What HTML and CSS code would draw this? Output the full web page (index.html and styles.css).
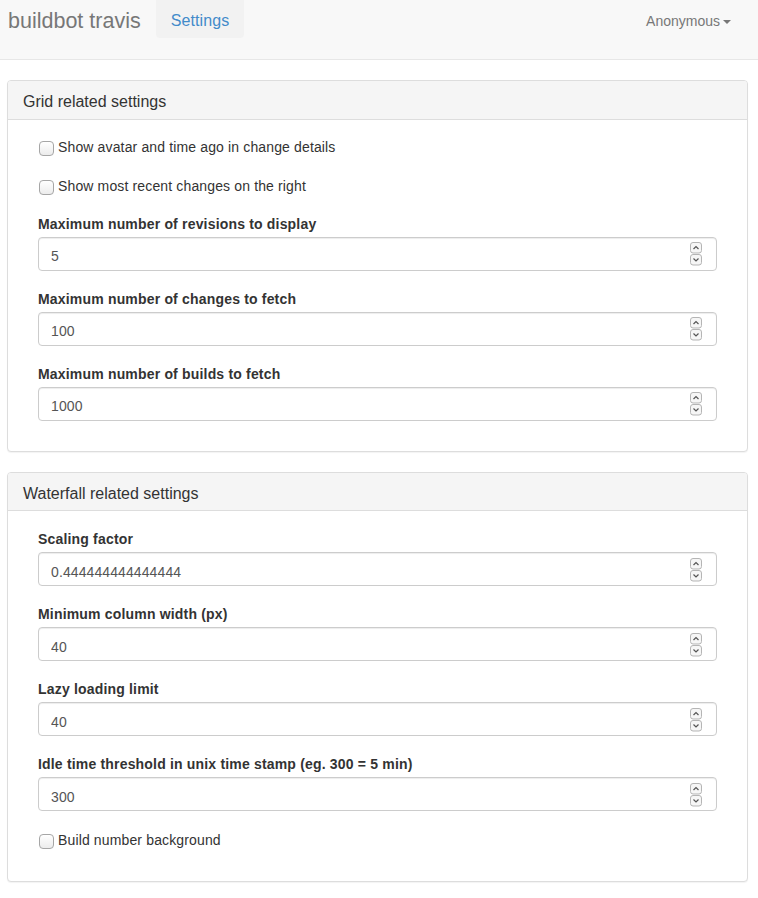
FILE: index.html
```html
<!DOCTYPE html>
<html>
<head>
<meta charset="utf-8">
<title>Settings</title>
<link rel="stylesheet" href="styles.css">
</head>
<body>
<nav class="navbar">
  <a class="brand" href="#">buildbot travis</a>
  <ul class="nav">
    <li><a class="nav-link active" href="#">Settings</a></li>
  </ul>
  <div class="user">Anonymous<span class="caret"></span></div>
</nav>

<main class="page">
  <section class="panel">
    <div class="panel-heading">Grid related settings</div>
    <div class="panel-body">
      <label class="check"><input type="checkbox" class="box">Show avatar and time ago in change details</label>
      <label class="check"><input type="checkbox" class="box">Show most recent changes on the right</label>
      <div class="form-group">
        <label class="field-label">Maximum number of revisions to display</label>
        <div class="num"><input class="num-input" type="text" value="5"><svg class="spin" width="12" height="24" viewBox="0 0 12 24"><rect x="0.5" y="0.5" width="11" height="10.5" rx="2.5" fill="#f6f6f6" stroke="#b5b5b5"/><path d="M3.5 7 L6 4.5 L8.5 7" fill="none" stroke="#555" stroke-width="1.2"/><rect x="0.5" y="12.5" width="11" height="10.5" rx="2.5" fill="#f6f6f6" stroke="#b5b5b5"/><path d="M3.5 16.5 L6 19 L8.5 16.5" fill="none" stroke="#555" stroke-width="1.2"/></svg></div>
      </div>
      <div class="form-group">
        <label class="field-label">Maximum number of changes to fetch</label>
        <div class="num"><input class="num-input" type="text" value="100"><svg class="spin" width="12" height="24" viewBox="0 0 12 24"><rect x="0.5" y="0.5" width="11" height="10.5" rx="2.5" fill="#f6f6f6" stroke="#b5b5b5"/><path d="M3.5 7 L6 4.5 L8.5 7" fill="none" stroke="#555" stroke-width="1.2"/><rect x="0.5" y="12.5" width="11" height="10.5" rx="2.5" fill="#f6f6f6" stroke="#b5b5b5"/><path d="M3.5 16.5 L6 19 L8.5 16.5" fill="none" stroke="#555" stroke-width="1.2"/></svg></div>
      </div>
      <div class="form-group last">
        <label class="field-label">Maximum number of builds to fetch</label>
        <div class="num"><input class="num-input" type="text" value="1000"><svg class="spin" width="12" height="24" viewBox="0 0 12 24"><rect x="0.5" y="0.5" width="11" height="10.5" rx="2.5" fill="#f6f6f6" stroke="#b5b5b5"/><path d="M3.5 7 L6 4.5 L8.5 7" fill="none" stroke="#555" stroke-width="1.2"/><rect x="0.5" y="12.5" width="11" height="10.5" rx="2.5" fill="#f6f6f6" stroke="#b5b5b5"/><path d="M3.5 16.5 L6 19 L8.5 16.5" fill="none" stroke="#555" stroke-width="1.2"/></svg></div>
      </div>
    </div>
  </section>

  <section class="panel">
    <div class="panel-heading">Waterfall related settings</div>
    <div class="panel-body">
      <div class="form-group">
        <label class="field-label">Scaling factor</label>
        <div class="num"><input class="num-input" type="text" value="0.444444444444444"><svg class="spin" width="12" height="24" viewBox="0 0 12 24"><rect x="0.5" y="0.5" width="11" height="10.5" rx="2.5" fill="#f6f6f6" stroke="#b5b5b5"/><path d="M3.5 7 L6 4.5 L8.5 7" fill="none" stroke="#555" stroke-width="1.2"/><rect x="0.5" y="12.5" width="11" height="10.5" rx="2.5" fill="#f6f6f6" stroke="#b5b5b5"/><path d="M3.5 16.5 L6 19 L8.5 16.5" fill="none" stroke="#555" stroke-width="1.2"/></svg></div>
      </div>
      <div class="form-group">
        <label class="field-label">Minimum column width (px)</label>
        <div class="num"><input class="num-input" type="text" value="40"><svg class="spin" width="12" height="24" viewBox="0 0 12 24"><rect x="0.5" y="0.5" width="11" height="10.5" rx="2.5" fill="#f6f6f6" stroke="#b5b5b5"/><path d="M3.5 7 L6 4.5 L8.5 7" fill="none" stroke="#555" stroke-width="1.2"/><rect x="0.5" y="12.5" width="11" height="10.5" rx="2.5" fill="#f6f6f6" stroke="#b5b5b5"/><path d="M3.5 16.5 L6 19 L8.5 16.5" fill="none" stroke="#555" stroke-width="1.2"/></svg></div>
      </div>
      <div class="form-group">
        <label class="field-label">Lazy loading limit</label>
        <div class="num"><input class="num-input" type="text" value="40"><svg class="spin" width="12" height="24" viewBox="0 0 12 24"><rect x="0.5" y="0.5" width="11" height="10.5" rx="2.5" fill="#f6f6f6" stroke="#b5b5b5"/><path d="M3.5 7 L6 4.5 L8.5 7" fill="none" stroke="#555" stroke-width="1.2"/><rect x="0.5" y="12.5" width="11" height="10.5" rx="2.5" fill="#f6f6f6" stroke="#b5b5b5"/><path d="M3.5 16.5 L6 19 L8.5 16.5" fill="none" stroke="#555" stroke-width="1.2"/></svg></div>
      </div>
      <div class="form-group">
        <label class="field-label">Idle time threshold in unix time stamp (eg. 300 = 5 min)</label>
        <div class="num"><input class="num-input" type="text" value="300"><svg class="spin" width="12" height="24" viewBox="0 0 12 24"><rect x="0.5" y="0.5" width="11" height="10.5" rx="2.5" fill="#f6f6f6" stroke="#b5b5b5"/><path d="M3.5 7 L6 4.5 L8.5 7" fill="none" stroke="#555" stroke-width="1.2"/><rect x="0.5" y="12.5" width="11" height="10.5" rx="2.5" fill="#f6f6f6" stroke="#b5b5b5"/><path d="M3.5 16.5 L6 19 L8.5 16.5" fill="none" stroke="#555" stroke-width="1.2"/></svg></div>
      </div>
      <label class="check last"><input type="checkbox" class="box">Build number background</label>
    </div>
  </section>
</main>
</body>
</html>
```

FILE: styles.css
```css
* { box-sizing: border-box; }

body {
  margin: 0;
  font-family: "Liberation Sans", Arial, Helvetica, sans-serif;
  font-size: 14px;
  line-height: 20px;
  color: #333;
  background: #fff;
}

.navbar {
  display: flex;
  align-items: flex-start;
  height: 60px;
  background: #f8f8f8;
  border-bottom: 1px solid #e7e7e7;
  margin-bottom: 20px;
}

.brand {
  display: block;
  padding: 11px 15px 0 8px;
  font-size: 21.5px;
  line-height: 20px;
  color: #777;
  text-decoration: none;
}

.nav {
  list-style: none;
  margin: 0;
  padding: 0;
  display: flex;
}

.nav-link {
  display: block;
  padding: 11px 15px 7px 15px;
  font-size: 16px;
  line-height: 20px;
  color: #428bca;
  text-decoration: none;
  letter-spacing: 0.1px;
}

.nav-link.active {
  background: #f2f2f2;
  border-radius: 0 0 4px 4px;
}

.user {
  margin-left: auto;
  padding: 11px 27px 0 0;
  color: #777;
  font-size: 14px;
  line-height: 20px;
  display: flex;
  align-items: center;
}

.caret {
  display: inline-block;
  width: 0;
  height: 0;
  margin-left: 3px;
  margin-top: 1px;
  border-top: 4px solid #777;
  border-left: 4px solid transparent;
  border-right: 4px solid transparent;
}

.page {
  padding: 0 10px 0 7px;
}

.panel {
  border: 1px solid #ddd;
  border-radius: 4px;
  background: #fff;
  box-shadow: 0 1px 1px rgba(0, 0, 0, 0.05);
  margin-bottom: 20px;
}

.panel-heading {
  background: #f5f5f5;
  border-bottom: 1px solid #ddd;
  border-radius: 3px 3px 0 0;
  padding: 12px 15px 8px 15px;
  font-size: 16px;
  line-height: 17.6px;
  color: #333;
}

.panel-body {
  padding: 16px 30px 15px 30px;
}

.check {
  display: flex;
  align-items: flex-start;
  height: 20px;
  line-height: 22px;
  margin-bottom: 17px;
  font-weight: normal;
  color: #333;
  letter-spacing: 0.14px;
}

.check + .check {
  margin-top: 19px;
}

.check.last {
  margin-top: 18px;
  margin-bottom: 17px;
}

.box {
  -webkit-appearance: none;
  appearance: none;
  width: 15px;
  height: 15px;
  margin: 5px 4px 0 1px;
  border: 1px solid #a6a6a6;
  border-radius: 4px;
  background: linear-gradient(#ffffff, #ececec);
  flex: none;
}

.form-group {
  margin-bottom: 16px;
}

.form-group.last {
  margin-bottom: 15px;
}

.field-label {
  display: block;
  font-weight: bold;
  line-height: 20px;
  padding-top: 2px;
  margin-bottom: 3px;
  letter-spacing: 0.18px;
}

.num {
  display: flex;
  align-items: center;
  height: 34px;
  border: 1px solid #ccc;
  border-radius: 4px;
  box-shadow: inset 0 1px 1px rgba(0, 0, 0, 0.075);
  padding: 1px 14px 0 12px;
  background: #fff;
}

.num-input {
  flex: 1;
  min-width: 0;
  border: 0;
  outline: 0;
  padding: 0;
  margin: 4px 0 0 0;
  background: transparent;
  font-family: inherit;
  font-size: 14px;
  color: #555;
  height: 20px;
  line-height: 20px;
  letter-spacing: 0.1px;
}

.spin {
  flex: none;
  display: block;
}
```
